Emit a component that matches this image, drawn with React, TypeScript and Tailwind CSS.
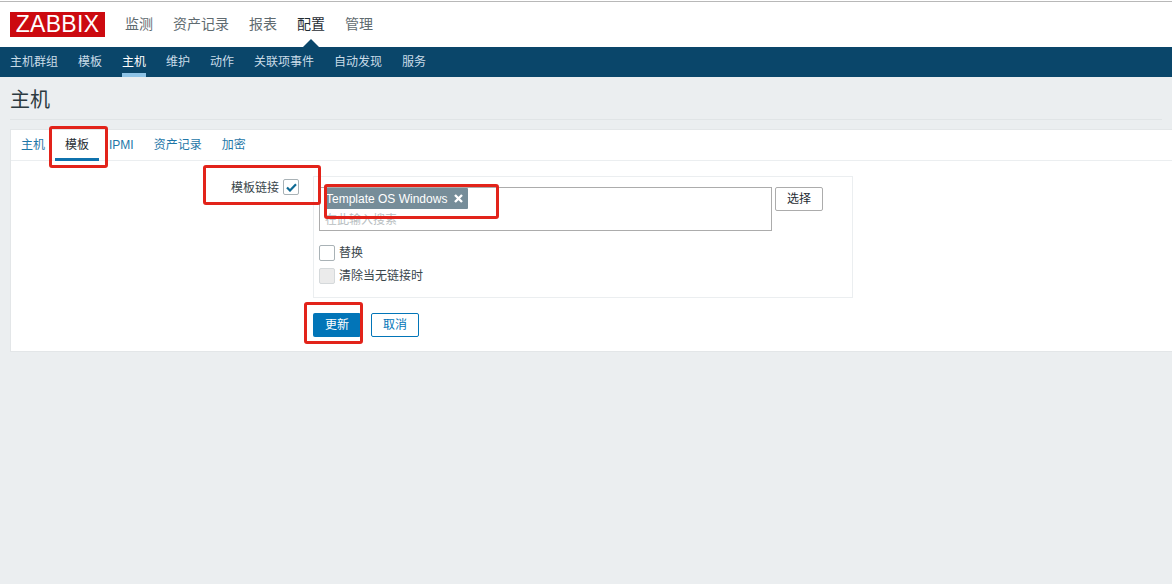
const font = "font-['Liberation_Sans','Noto_Sans_CJK_SC',sans-serif]";

function RedBox({ className }: { className: string }) {
  return <div className={`absolute border-[3px] border-[#e2231a] rounded-[3px] pointer-events-none ${className}`} />;
}

export default function App() {
  const top = ["监测", "资产记录", "报表", "配置", "管理"];
  const sub = ["主机群组", "模板", "主机", "维护", "动作", "关联项事件", "自动发现", "服务"];
  const tabs = ["主机", "模板", "IPMI", "资产记录", "加密"];
  return (
    <div className={`relative w-[1172px] h-[584px] overflow-hidden bg-[#ebeef0] text-[12px] text-[#1f2c33] ${font}`}>
      <div className="h-[1px] bg-white" />
      <header className="h-[46px] bg-white border-t border-[#b8b8b8] flex items-start pl-[10px]">
        <div className="mt-[10px] w-[95px] h-[25px] bg-[#cc0a10] text-white text-[23px] leading-[25px] text-center tracking-[0.3px]">ZABBIX</div>
        <nav className="flex ml-[20px] gap-[20px] mt-[12px] text-[14px] leading-[20px]">
          {top.map((t) => (
            <span key={t} className={t === "配置" ? "text-[#1f2c33]" : "text-[#5f6b70]"}>{t}</span>
          ))}
        </nav>
      </header>
      <div className="relative h-[30px] bg-[#0a466a] flex pl-[10px] gap-[20px] text-[12px] leading-[30px] text-[#c9dce8]">
        {sub.map((t) => (
          <span key={t} className={t === "主机" ? "text-white border-b-[4px] border-[#8ec3e6] h-[30px]" : ""}>{t}</span>
        ))}
        <div className="absolute left-[303px] -top-[8px] w-0 h-0 border-x-[8px] border-x-transparent border-b-[8px] border-b-[#0a466a]" />
      </div>
      <div className="mx-[10px] h-[43px] border-b border-[#e0e4e6] text-[20px] leading-[46px] text-[#2c3a40]">主机</div>
      <section className="ml-[10px] mt-[9px] h-[223px] bg-white border border-[#e3e6e8] border-r-0">
        <div className="h-[31px] border-b border-[#ebeef0] flex pl-[10px] gap-[20px] leading-[30px] text-[#1f77a8]">
          {tabs.map((t) => (
            <span key={t} className={t === "模板" ? "h-[31px] text-[#1f2c33] border-b-[3px] border-[#0f72ad] px-[10px] -mx-[10px]" : ""}>{t}</span>
          ))}
        </div>
        <div className="flex">
          <div className="w-[302px] shrink-0 flex justify-end items-center gap-[4px] pr-[14px] h-[18px] mt-[17px] text-[#3a464b]">
            <span className="mt-[2px]">模板链接</span>
            <span className="w-[16px] h-[16px] border border-[#a9b2b6] rounded-[2px] flex items-center justify-center">
              <svg width="11" height="9" viewBox="0 0 11 9" fill="none">
                <path d="M1 4.5 L4 7.5 L10 1.2" stroke="#0f6a94" strokeWidth="2.2" />
              </svg>
            </span>
          </div>
          <div className="mt-[15px] w-[540px] h-[122px] border border-[#ebeef0] px-[5px] pt-[10px]">
            <div className="flex gap-[3px]">
              <div className="w-[453px] h-[44px] border border-[#acacac] pl-[5px]">
                <div className="flex items-center h-[21px] w-[143px] bg-[#768d99] text-white pl-[1px] gap-[7px] rounded-[1px]">
                  <span>Template OS Windows</span>
                  <svg width="9" height="9" viewBox="0 0 9 9"><path d="M1 1 L8 8 M8 1 L1 8" stroke="white" strokeWidth="2.4" /></svg>
                </div>
                <div className="text-[#b8bec1] leading-[16px] mt-[3px]">在此输入搜索</div>
              </div>
              <button className="w-[48px] h-[24px] bg-white border border-[#acacac] rounded-[2px] text-[#1f2c33] text-[12px]">选择</button>
            </div>
            <div className="flex items-center gap-[4px] mt-[14px] h-[16px] text-[#3a464b]">
              <span className="w-[16px] h-[16px] border border-[#a9b2b6] rounded-[2px] bg-white" />
              <span>替换</span>
            </div>
            <div className="flex items-center gap-[4px] mt-[7px] h-[16px] text-[#3a464b]">
              <span className="w-[16px] h-[16px] border border-[#d5d9db] rounded-[2px] bg-[#ebebeb]" />
              <span>清除当无链接时</span>
            </div>
          </div>
        </div>
        <div className="flex ml-[302px] mt-[15px] gap-[10px]">
          <button className="w-[48px] h-[24px] bg-[#0275b8] text-white rounded-[2px] text-[12px]">更新</button>
          <button className="w-[48px] h-[24px] bg-white border border-[#0275b8] text-[#0275b8] rounded-[2px] text-[12px]">取消</button>
        </div>
      </section>
      <RedBox className="left-[49px] top-[126px] w-[59px] h-[42px]" />
      <RedBox className="left-[203px] top-[165px] w-[118px] h-[40px]" />
      <RedBox className="left-[324px] top-[184px] w-[175px] h-[35px]" />
      <RedBox className="left-[304px] top-[302px] w-[59px] h-[42px]" />
    </div>
  );
}
